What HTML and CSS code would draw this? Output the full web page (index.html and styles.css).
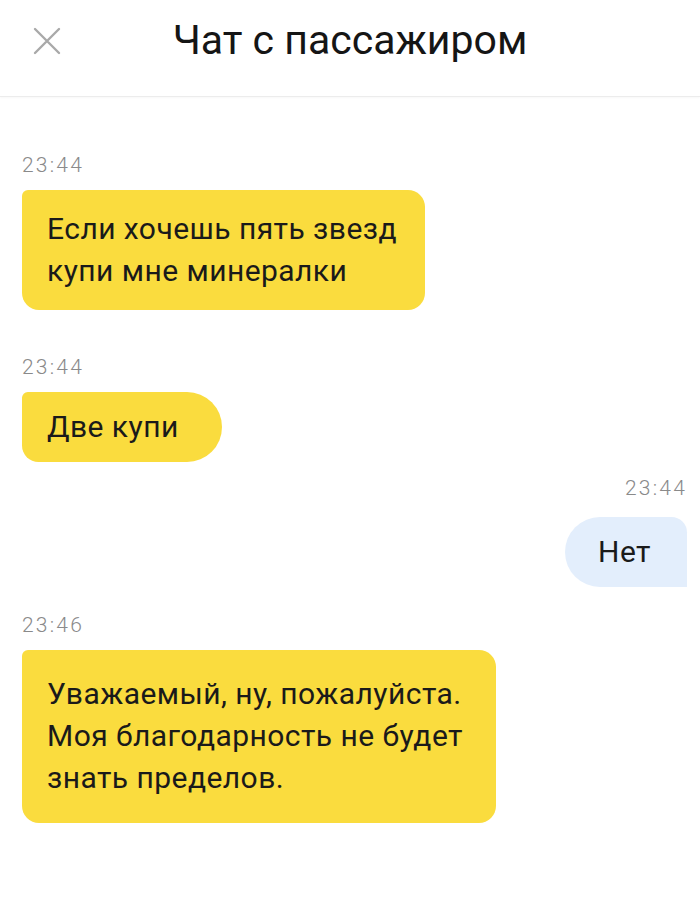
FILE: index.html
```html
<!DOCTYPE html>
<html lang="ru">
<head>
  <meta charset="UTF-8">
  <title>Чат с пассажиром</title>
  <link rel="stylesheet" href="styles.css">
</head>
<body>
  <div class="header">
    <button class="close" aria-label="Закрыть">
      <svg width="28" height="28" viewBox="0 0 28 28">
        <path d="M2 2 L26 26 M26 2 L2 26" stroke="#a9a9a9" stroke-width="2.4" stroke-linecap="round" fill="none"/>
      </svg>
    </button>
    <h1>Чат с пассажиром</h1>
    <span></span>
  </div>

  <div class="chat">
    <div class="msg in first">
      <div class="time">23:44</div>
      <div class="bubble multi">Если хочешь пять звезд<br>купи мне минералки</div>
    </div>

    <div class="msg in gap-lg">
      <div class="time">23:44</div>
      <div class="bubble single">Две купи</div>
    </div>

    <div class="msg out gap-sm">
      <div class="time">23:44</div>
      <div class="bubble single">Нет</div>
    </div>

    <div class="msg in gap-md">
      <div class="time">23:46</div>
      <div class="bubble multi wide">Уважаемый, ну, пожалуйста.<br>Моя благодарность не будет<br>знать пределов.</div>
    </div>
  </div>
</body>
</html>
```

FILE: styles.css
```css
body {
  margin: 0;
  background: #fff;
  font-family: Roboto, "Noto Sans", sans-serif;
  color: #1c1c1c;
}

.header {
  height: 96px;
  display: grid;
  grid-template-columns: 96px 1fr 96px;
  align-items: center;
  border-bottom: 1px solid #ececec;
  box-shadow: 0 1px 2px rgba(0,0,0,0.03);
}
.header h1 {
  margin: 0 0 16px;
  text-align: center;
  font-size: 41px;
  font-weight: 400;
  color: #151515;
}
.close {
  border: none;
  background: none;
  padding: 0;
  margin: 0 0 14px 33px;
  width: 28px;
  height: 28px;
}

.chat {
  display: flex;
  flex-direction: column;
  padding: 0 13px 40px 22px;
}
.msg {
  display: flex;
  flex-direction: column;
  align-items: flex-start;
}
.msg.out {
  align-items: flex-end;
}
.msg.first { margin-top: 54px; }
.msg.gap-lg { margin-top: 43px; }
.msg.gap-sm { margin-top: 12px; }
.msg.gap-md { margin-top: 24px; }

.time {
  font-size: 21px;
  font-weight: 300;
  letter-spacing: 2.2px;
  color: #8a8a8a;
  line-height: 28px;
  margin-bottom: 11px;
}
.msg.out .time {
  margin-bottom: 15px;
}

.bubble {
  background: #fadc3e;
  font-size: 30px;
  letter-spacing: 0.45px;
  line-height: 42px;
  color: #1a1a1a;
  padding: 0 28px 0 25px;
}
.bubble.multi {
  padding-top: 18px;
  padding-bottom: 18px;
  border-radius: 6px 17px 17px 17px;
}
.bubble.wide {
  padding: 23px 33px 24px 25px;
}
.bubble.single {
  padding-top: 14px;
  padding-bottom: 14px;
  padding-right: 43px;
  border-radius: 6px 36px 36px 17px;
}
.msg.out .bubble {
  background: #e3eefc;
  padding: 14px 36px 14px 33px;
  border-radius: 36px 16px 0 36px;
}
```
